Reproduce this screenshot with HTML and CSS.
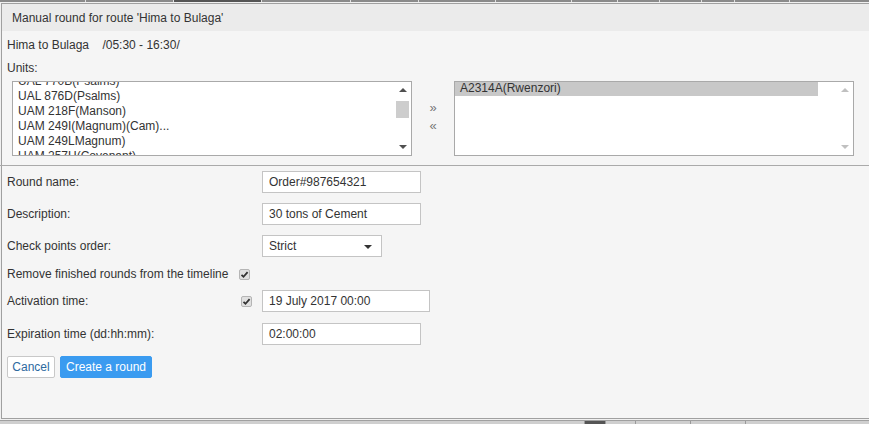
FILE: index.html
```html
<!DOCTYPE html>
<html>
<head>
<meta charset="utf-8">
<link rel="stylesheet" href="styles.css">
</head>
<body>
<div class="topstrip">
  <span class="seg" style="width:85px"></span>
  <span class="seg" style="width:87px"></span>
  <span class="seg dark" style="width:87px"></span>
  <span class="seg" style="width:88px"></span>
  <span class="seg" style="width:67px"></span>
  <span class="seg" style="width:76px"></span>
  <span class="seg" style="width:75px"></span>
  <span class="seg" style="width:45px"></span>
  <span class="seg" style="width:41px"></span>
  <span class="seg" style="width:41px"></span>
  <span class="seg" style="width:32px"></span>
  <span class="seg" style="width:54px"></span>
  <span class="seg" style="width:91px"></span>
</div>
<div class="dialog">
  <div class="dlg-head">Manual round for route 'Hima to Bulaga'</div>
  <div class="dlg-body">
    <div class="route">Hima to Bulaga &nbsp;&nbsp;&nbsp;/05:30 - 16:30/</div>
    <div class="units-label">Units:</div>
    <div class="units">
      <div class="listbox">
        <div class="items">
          <div class="item first">UAL 770B(Psalms)</div>
          <div class="item">UAL 876D(Psalms)</div>
          <div class="item">UAM 218F(Manson)</div>
          <div class="item">UAM 249I(Magnum)(Cam)...</div>
          <div class="item">UAM 249LMagnum)</div>
          <div class="item">UAM 257H(Covenant)</div>
        </div>
        <div class="sbar">
          <span class="arr up"></span>
          <span class="thumb"></span>
          <span class="fill"></span>
          <span class="arr down"></span>
        </div>
      </div>
      <div class="movers">
        <span>&raquo;</span>
        <span>&laquo;</span>
      </div>
      <div class="listbox">
        <div class="items">
          <div class="item sel">A2314A(Rwenzori)</div>
        </div>
        <div class="sbar disabled">
          <span class="arr up"></span>
          <span class="fill"></span>
          <span class="arr down"></span>
        </div>
      </div>
    </div>
  </div>
  <div class="form">
    <div class="row">
      <label class="lbl">Round name:</label>
      <div class="input w158">Order#987654321</div>
    </div>
    <div class="row">
      <label class="lbl">Description:</label>
      <div class="input w158">30 tons of Cement</div>
    </div>
    <div class="row">
      <label class="lbl">Check points order:</label>
      <div class="input select">Strict<span class="caret"></span></div>
    </div>
    <div class="row short">
      <label>Remove finished rounds from the timeline</label>
      <span class="cb cb-gap"><svg viewBox="0 0 11 11" width="11" height="11"><path d="M2.5 5.8 L4.5 7.8 L8.6 3.2" fill="none" stroke="#333" stroke-width="1.8"/></svg></span>
    </div>
    <div class="row act">
      <label class="lbl2">Activation time:</label>
      <span class="cb"><svg viewBox="0 0 11 11" width="11" height="11"><path d="M2.5 5.8 L4.5 7.8 L8.6 3.2" fill="none" stroke="#333" stroke-width="1.8"/></svg></span>
      <div class="input w168 ml10">19 July 2017 00:00</div>
    </div>
    <div class="row exp">
      <label class="lbl">Expiration time (dd:hh:mm):</label>
      <div class="input w158">02:00:00</div>
    </div>
    <div class="buttons">
      <button class="btn cancel">Cancel</button>
      <button class="btn primary">Create a round</button>
    </div>
  </div>
</div>
<div class="bottomstrip">
  <span class="bseg" style="width:584px"></span>
  <span class="bseg darkb" style="width:20px"></span>
  <span class="bseg" style="width:29px"></span>
  <span class="bseg" style="width:54px"></span>
  <span class="bseg" style="width:54px"></span>
  <span class="bseg" style="width:128px"></span>
</div>
</body>
</html>
```

FILE: styles.css
```css
html, body {
  margin: 0;
  padding: 0;
  width: 869px;
  height: 424px;
  overflow: hidden;
  background: #f0f0f0;
  font-family: "Liberation Sans", Arial, sans-serif;
  font-size: 12px;
  color: #333;
}
.topstrip {
  display: flex;
  height: 2px;
  background: #888;
}
.seg {
  height: 2px;
  background: #8a8a8a;
  border-right: 1px solid #e0e0e0;
  flex: none;
}
.seg.dark { background: #555; }
.dialog {
  margin-top: 1px;
  margin-left: 1px;
  width: 880px;
  height: 414px;
  border: 1px solid #a0a0a0;
  background: #f5f5f5;
  display: flex;
  flex-direction: column;
}
.dlg-head {
  height: 27px;
  line-height: 28px;
  padding-left: 10px;
  background: #ebebeb;
  flex: none;
}
.dlg-body {
  height: 135px;
  border-bottom: 1px solid #aaa;
  box-sizing: border-box;
  margin-left: -2px;
  padding: 6px 0 0 7px;
}
.route {
  height: 16px;
  line-height: 16px;
}
.units-label {
  margin-top: 8px;
  height: 14px;
  line-height: 14px;
}
.units {
  display: flex;
  margin-top: 6px;
  padding-left: 5px;
}
.listbox {
  width: 398px;
  height: 73px;
  border: 1px solid #a9a9a9;
  background: #fff;
  display: flex;
  flex: none;
}
.items {
  flex: 1;
  overflow: hidden;
  padding-left: 5px;
}
.item {
  height: 15px;
  line-height: 15px;
  white-space: nowrap;
}
.item.first { margin-top: -8px; }
.item.sel {
  background: #c8c8c8;
  margin-right: 18px;
  margin-left: -5px;
  padding-left: 5px;
  margin-top: -1px;
}
.sbar {
  width: 17px;
  display: flex;
  flex-direction: column;
  align-items: center;
  flex: none;
}
.arr {
  width: 0;
  height: 0;
  border-left: 4px solid transparent;
  border-right: 4px solid transparent;
  margin: 6px 0;
}
.arr.up { border-bottom: 4px solid #505050; }
.arr.down { border-top: 4px solid #505050; }
.disabled .arr.up { border-bottom-color: #c0c0c0; }
.disabled .arr.down { border-top-color: #c0c0c0; }
.thumb {
  width: 13px;
  height: 17px;
  background: #cdcdcd;
  margin-top: 3px;
}
.fill { flex: 1; }
.movers {
  width: 42px;
  flex: none;
  display: flex;
  flex-direction: column;
  align-items: center;
  padding-top: 18px;
  color: #777;
  font-size: 13px;
  line-height: 18px;
}
.form {
  padding: 5px 0 0 5px;
}
.row {
  display: flex;
  align-items: center;
  height: 22px;
  margin-bottom: 10px;
}
.row.short { margin-bottom: 5px; margin-top: -4px; }
.row.act { margin-bottom: 11px; }
.row.exp { margin-bottom: 11px; }
.lbl { width: 255px; flex: none; }
.lbl2 { width: 234px; flex: none; }
.input {
  height: 20px;
  line-height: 20px;
  border: 1px solid #c4c4c4;
  background: #fff;
  padding-left: 6px;
  box-sizing: content-box;
}
.w158 { width: 151px; }
.w168 { width: 160px; }
.ml10 { margin-left: 10px; }
.select {
  width: 112px;
  position: relative;
}
.caret {
  position: absolute;
  right: 9px;
  top: 9px;
  width: 0;
  height: 0;
  border-left: 4px solid transparent;
  border-right: 4px solid transparent;
  border-top: 4px solid #333;
}
.cb {
  width: 11px;
  height: 11px;
  border: 1px solid #b5b5b5;
  border-radius: 2px;
  background: #e0e0e0;
  box-sizing: border-box;
  display: inline-flex;
  align-items: center;
  justify-content: center;
  overflow: hidden;
  flex: none;
}
.cb svg { display: block; margin: -1px; }
.cb-gap { margin-left: 11px; }
.buttons {
  display: flex;
  gap: 5px;
}
.btn {
  font-family: "Liberation Sans", Arial, sans-serif;
  font-size: 12px;
  height: 22px;
  padding: 0;
  border-radius: 2px;
  white-space: nowrap;
  box-sizing: border-box;
  cursor: pointer;
}
.btn.cancel {
  background: #fff;
  border: 1px solid #c8c8c8;
  color: #2d6a9f;
  width: 48px;
}
.btn.primary {
  background: #3a9bf0;
  border: 1px solid #3a9bf0;
  color: #fff;
  width: 92px;
}
.bottomstrip {
  margin-top: 1px;
  border-top: 1px solid #a0a0a0;
  height: 4px;
  background: #cfcfcf;
  display: flex;
}
.bseg {
  height: 4px;
  border-right: 1px solid #999;
  flex: none;
}
.bseg.darkb { background: #555; }
```
